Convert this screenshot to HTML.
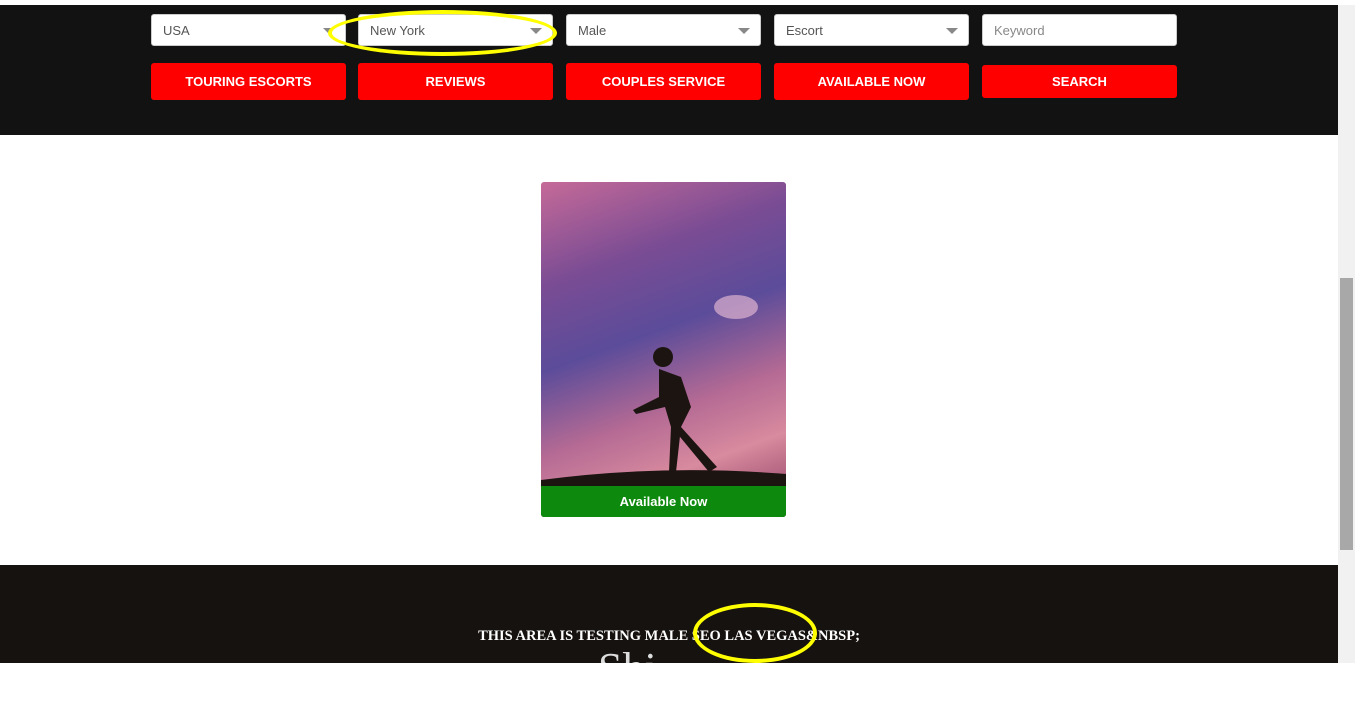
<!DOCTYPE html>
<html><head><style>
*{margin:0;padding:0;box-sizing:border-box}
body{width:1366px;height:728px;background:#fff;position:relative;overflow:hidden;font-family:"Liberation Sans",sans-serif}
.dark{position:absolute;left:0;top:5px;width:1338px;height:130px;background:#121212}
.f{position:absolute;top:14px;height:32px;width:195px;background:#fff;border-radius:3px;border:1px solid #ccc;font-size:13px;color:#555;padding:8px 11px}
.f i{position:absolute;right:10px;top:13px;border-left:6px solid transparent;border-right:6px solid transparent;border-top:6px solid #888}
.b{position:absolute;top:63px;height:37px;width:195px;background:#f00;border-radius:3px;color:#fff;font-weight:bold;font-size:13px;text-align:center;line-height:37px}
.card{position:absolute;left:541px;top:182px;width:245px;height:335px;border-radius:3px;overflow:hidden;background:linear-gradient(160deg,#c56a98 0%,#7a4c94 25%,#5b4c9a 45%,#b46a94 65%,#d88a9e 80%,#a85a7a 92%)}
.green{position:absolute;left:0;bottom:0;width:100%;height:31px;background:#0d8a0d;color:#fff;font-size:13px;font-weight:bold;text-align:center;line-height:31px}
.foot{position:absolute;left:0;top:565px;width:1338px;height:98px;background:#16120f;overflow:hidden}
.sb{position:absolute;left:1338px;top:5px;width:17px;height:658px;background:#f1f1f1}
.ov{position:absolute;border:4px solid #ff0;border-radius:50%}
</style></head><body>
<div class="dark"></div>
<div class="f" style="left:151px">USA<i></i></div>
<div class="f" style="left:358px">New York<i></i></div>
<div class="f" style="left:566px">Male<i></i></div>
<div class="f" style="left:774px">Escort<i></i></div>
<div class="f" style="left:982px;color:#888">Keyword</div>
<div class="b" style="left:151px">TOURING ESCORTS</div>
<div class="b" style="left:358px">REVIEWS</div>
<div class="b" style="left:566px">COUPLES SERVICE</div>
<div class="b" style="left:774px">AVAILABLE NOW</div>
<div class="b" style="left:982px;top:65px;height:33px;line-height:33px">SEARCH</div>
<div class="ov" style="left:328px;top:10px;width:229px;height:46px"></div>
<div class="card">
<svg width="245" height="335" style="position:absolute;left:0;top:0"><ellipse cx="195" cy="125" rx="22" ry="12" fill="#f4c4d8" opacity=".6"/><path d="M0 298 Q120 282 245 292 L245 335 L0 335Z" fill="#1c1410"/><circle cx="122" cy="175" r="10" fill="#1c1410"/><path d="M118 187 L140 195 L150 225 L140 245 L135 290 L128 290 L130 245 L124 225 L95 232 L92 228 L118 215Z M140 245 L176 285 L168 290 L135 250Z" fill="#1c1410"/></svg>
<div class="green">Available Now</div></div>
<div class="foot"><div style="position:absolute;left:0;width:100%;top:63px;text-align:center;font-family:'Liberation Serif',serif;font-weight:bold;color:#fff;font-size:14.5px;padding-left:0">THIS AREA IS TESTING MALE SEO LAS VEGAS&amp;NBSP;</div>
<div style="position:absolute;left:598px;top:78px;font-family:'Liberation Serif',serif;color:#ddd;font-size:44px">Shi</div></div>
<div class="ov" style="left:693px;top:603px;width:124px;height:60px"></div>
<div class="sb"><div style="position:absolute;left:2px;top:273px;width:13px;height:272px;background:#a8a8a8"></div></div>
</body></html>
